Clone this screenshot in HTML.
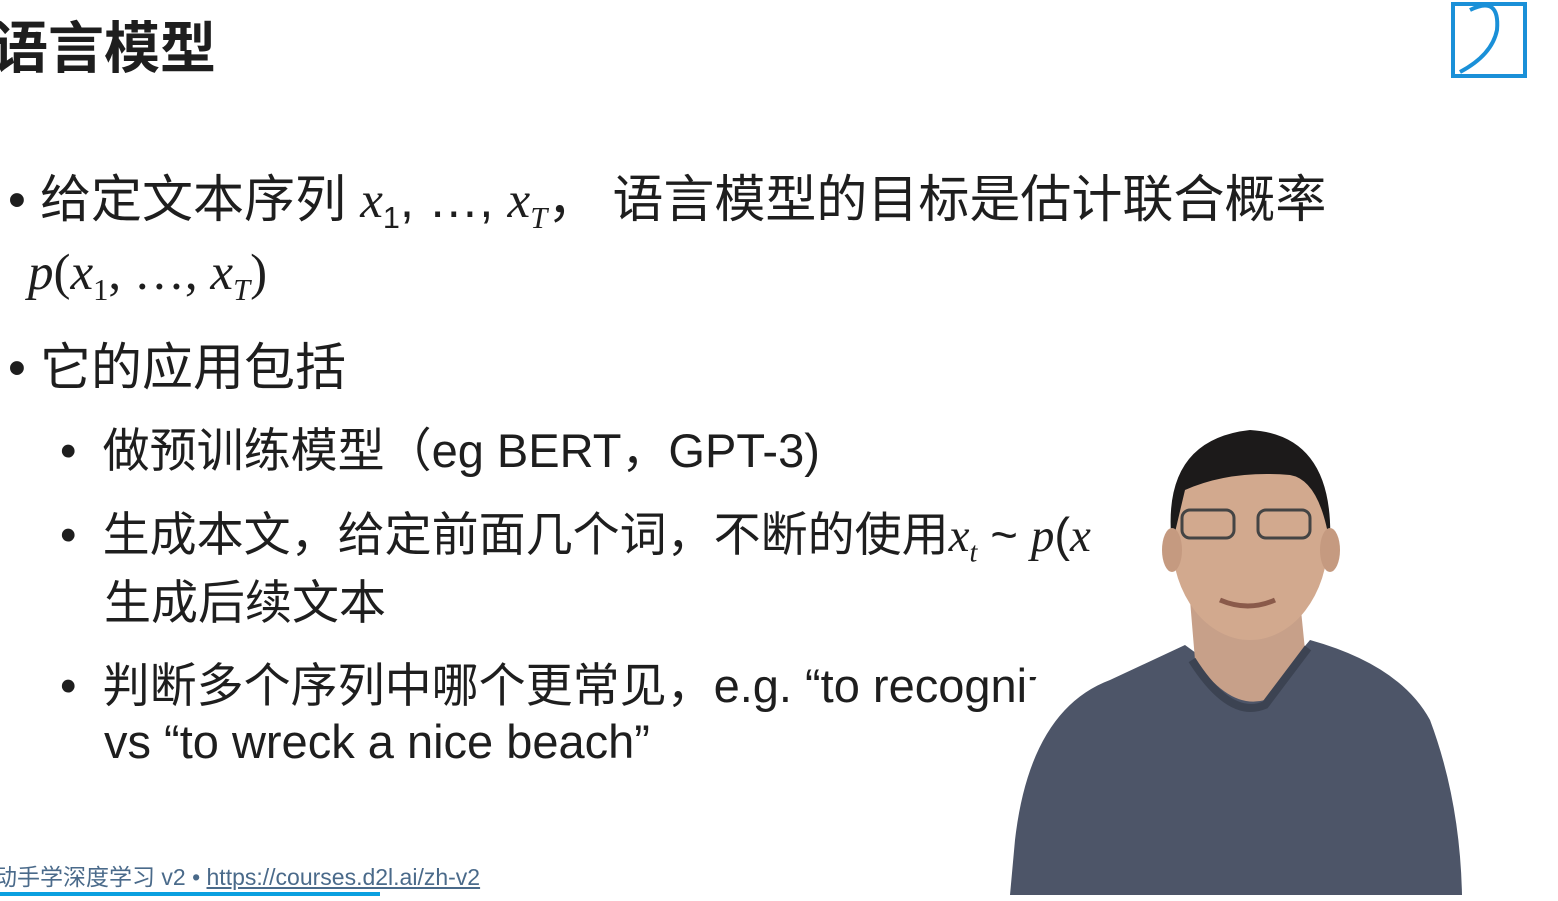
<!DOCTYPE html>
<html><head><meta charset="utf-8"><style>
body{margin:0;width:1558px;height:901px;background:#fff;position:relative;overflow:hidden;font-family:"Liberation Sans","Noto Sans CJK SC",sans-serif;color:#1e1e1e}
.t{position:absolute;white-space:nowrap}
i{font-family:"Liberation Serif",serif}
sub{font-size:0.6em}
</style></head><body>
<div class="t" style="left:-8px;top:4px;font-size:56px;font-weight:bold">语言模型</div>
<div class="t" style="left:8px;top:158px;font-size:51px">•&nbsp;给定文本序列 <i>x</i><sub>1</sub>, …, <i>x<sub>T</sub></i>， 语言模型的目标是估计联合概率</div>
<div class="t" style="left:28px;top:244px;font-size:51px;font-family:'Liberation Serif',serif"><i>p</i>(<i>x</i><sub>1</sub>, …, <i>x<sub>T</sub></i>)</div>
<div class="t" style="left:8px;top:326px;font-size:51px">•&nbsp;它的应用包括</div>
<div class="t" style="left:60px;top:412px;font-size:47px">•&nbsp;&nbsp;做预训练模型（eg BERT，GPT-3)</div>
<div class="t" style="left:60px;top:496px;font-size:47px">•&nbsp;&nbsp;生成本文，给定前面几个词，不断的使用<i>x<sub>t</sub></i> ~ <i>p</i>(<i>x<sub>t</sub></i> | <i>x</i>… <sub>t-1</sub>) 来</div>
<div class="t" style="left:104px;top:564px;font-size:47px">生成后续文本</div>
<div class="t" style="left:60px;top:647px;font-size:47px">•&nbsp;&nbsp;判断多个序列中哪个更常见，e.g. “to recognize speech”</div>
<div class="t" style="left:104px;top:714px;font-size:47px">vs “to wreck a nice beach”</div>
<div class="t" style="left:-6px;top:858px;font-size:23px;color:#4a6a8a">动手学深度学习 v2 • <span style="text-decoration:underline">https://courses.d2l.ai/zh-v2</span></div>
<div style="position:absolute;left:0;top:892px;width:380px;height:4px;background:#0aa0e0"></div>
<svg style="position:absolute;left:0;top:0" width="1558" height="901">
<polygon points="1165,378 1558,375 1558,901 940,901" fill="#fff"/>
<rect x="1453" y="4" width="72" height="72" fill="none" stroke="#1a90d8" stroke-width="4"/>
<path d="M1470,10 Q1500,-5 1497,30 Q1492,55 1460,72" fill="none" stroke="#1a90d8" stroke-width="4"/>
<path d="M1010,895 L1015,840 Q1030,710 1110,680 L1185,645 L1260,700 L1310,640 Q1400,665 1430,720 Q1460,800 1462,895 Z" fill="#4d5568"/>
<path d="M1190,600 L1195,660 Q1230,710 1265,700 L1305,650 L1300,600 Z" fill="#c7a089"/>
<path d="M1192,660 Q1230,720 1265,705 L1308,648" fill="none" stroke="#3c4352" stroke-width="8"/>
<ellipse cx="1250" cy="540" rx="78" ry="100" fill="#d2a98e"/>
<path d="M1172,545 Q1160,440 1250,430 Q1335,435 1330,545 Q1320,480 1290,475 Q1230,470 1185,490 Z" fill="#1c1a1a"/>
<ellipse cx="1172" cy="550" rx="10" ry="22" fill="#c59a80"/>
<ellipse cx="1330" cy="550" rx="10" ry="22" fill="#c59a80"/>
<rect x="1182" y="510" width="52" height="28" rx="8" fill="none" stroke="#444" stroke-width="3"/>
<rect x="1258" y="510" width="52" height="28" rx="8" fill="none" stroke="#444" stroke-width="3"/>
<path d="M1220,600 Q1248,612 1275,600" stroke="#8a5a4a" stroke-width="5" fill="none"/>
</svg>
</body></html>
